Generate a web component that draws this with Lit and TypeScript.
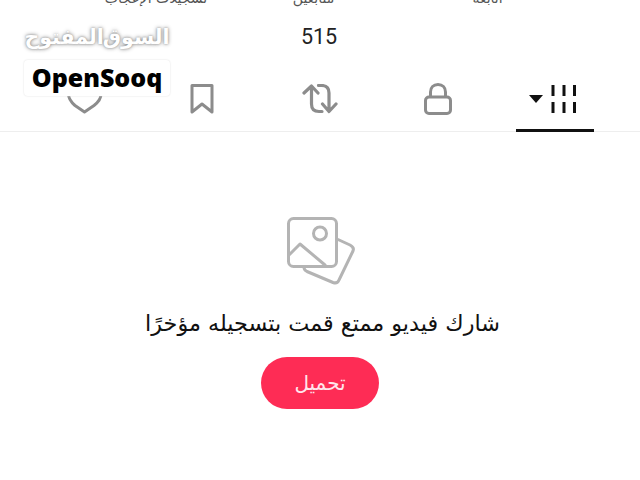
import { LitElement, html, css } from "lit";
import { customElement } from "lit/decorators.js";

@customElement("app-root")
export class AppRoot extends LitElement {
  static styles = css`
    :host { display: block; width: 640px; height: 480px; overflow: hidden; background: #fff; position: relative;
      font-family: "DejaVu Sans", "Noto Sans", sans-serif; color: #111; }
    .labels { display: grid; grid-template-columns: 90px 132px 70px 43px 135px 35px 1fr; height: 8px; overflow: hidden; }
    .label { font-size: 14px; line-height: 18px; margin-top: -11px; color: #555; white-space: nowrap; display: flex; justify-content: center; }
    .c1 { grid-column: 2; }
    .c2 { grid-column: 4; }
    .c3 { grid-column: 6; }
    .count { text-align: center; font: 21.5px/26px Roboto, sans-serif; margin-top: 16px; color: #222; height: 31px; padding-right: 2px; }
    .tabs { display: flex; padding: 0 26px; height: 76px; border-bottom: 1px solid #eee; }
    .tab { flex: 1; display: flex; align-items: flex-start; justify-content: center; padding-top: 29px; position: relative; }
    .tab svg { display: block; }
    .up { margin-top: -1px; }
    .nudge { margin-left: -3px; }
    .active::after { content: ""; position: absolute; left: 19.6px; bottom: -1px; width: 78px; height: 3px; background: #111; }
    .empty { display: flex; flex-direction: column; align-items: center; padding-top: 85px; }
    .pic { margin-left: 1px; }
    .msg { font-size: 22.3px; line-height: 30px; margin-top: 23px; margin-left: 5px; color: #111; white-space: nowrap; }
    .btn { margin-top: 19px; width: 118px; height: 52px; border-radius: 26px; background: #fe2c55; color: #ffe6ec;
      display: flex; align-items: center; justify-content: center; font-size: 20px; }
    .mark { position: absolute; left: 24px; top: 18px; width: 146px; display: flex; flex-direction: column; align-items: center; }
    .mark-ar { color: #fff; font-size: 20.5px; line-height: 38px; font-weight: 700; white-space: nowrap; word-spacing: -8px;
      text-shadow: 0 0 4px #888, 0 0 2px #aaa; }
    .mark-box { margin-top: 4px; width: 146px; height: 36px; background: #fff; border-radius: 4px; box-shadow: 0 0 2px #ddd;
      display: flex; align-items: center; justify-content: center; font: 800 25px/34px "Open Sans", sans-serif; color: #000; padding-bottom: 2px; box-sizing: border-box; }
  `;

  render() {
    return html`
      <div class="labels">
        <div class="label c1" dir="rtl">تسجيلات الإعجاب</div>
        <div class="label c2" dir="rtl">متابعين</div>
        <div class="label c3" dir="rtl">أتابعه</div>
      </div>
      <div class="count">515</div>
      <div class="tabs">
        <div class="tab">
          <svg width="36" height="32" viewBox="0 0 36 32" fill="none" stroke="#8c8c8c" stroke-width="3" stroke-linecap="round" stroke-linejoin="round">
            <path d="M17.5 28 L8 21.5 C4 18 1.5 14 1.5 10 C1.5 4 6 1 10 1 C13.5 1 16 3 17.5 5.5 C19 3 22.5 1 26 1 C30 1 34 4 34 10 C34 14 31.5 18 27 21.5 Z"/>
          </svg>
        </div>
        <div class="tab">
          <svg width="24" height="30" viewBox="0 0 24 30" fill="none" stroke="#8c8c8c" stroke-width="3" stroke-linejoin="round">
            <path d="M2 1.5 H22 V28 L12 20 L2 28 Z"/>
          </svg>
        </div>
        <div class="tab">
          <svg width="36" height="30" viewBox="0 0 36 30" fill="none" stroke="#8c8c8c" stroke-width="3.2" stroke-linecap="round" stroke-linejoin="round">
            <path d="M2 9 L9.5 2 L16 9 M9.5 3 V20 C9.5 25 12 27.5 17 27.5 H20"/>
            <path d="M34 20 L27 27.5 L20.5 20 M27 26 V9 C27 4 24.5 1.5 19.5 1.5 H16.5"/>
          </svg>
        </div>
        <div class="tab">
          <svg class="up" width="28" height="32" viewBox="0 0 28 32" fill="none" stroke="#8c8c8c" stroke-width="3">
            <rect x="1.5" y="14" width="25" height="16.5" rx="3.5"/>
            <path d="M6.5 14 V9 C6.5 4.5 9.5 1.5 14 1.5 C18.5 1.5 21.5 4.5 21.5 9 V14"/>
          </svg>
        </div>
        <div class="tab active">
          <svg class="nudge" width="50" height="30" viewBox="0 0 50 30" fill="#111">
            <path d="M0 11 H14 L7 19 Z"/>
            <rect x="22.5" y="1" width="3" height="11"/><rect x="33.5" y="1" width="3" height="11"/><rect x="44" y="1" width="3" height="11"/>
            <rect x="22.5" y="18" width="3" height="11"/><rect x="33.5" y="18" width="3" height="11"/><rect x="44" y="18" width="3" height="11"/>
          </svg>
        </div>
      </div>
      <div class="empty">
        <svg class="pic" width="68" height="68" viewBox="0 0 68 68" fill="none" stroke="#b4b4b4" stroke-width="3" stroke-linejoin="round" stroke-linecap="round">
          <rect x="1.5" y="1.5" width="48" height="48" rx="5"/>
          <circle cx="33" cy="16.5" r="6.5"/>
          <path d="M2 38 L13 27 L38 48"/>
          <path d="M17 50.5 C17 52 18 53.5 20 54.5 L46 65.5 C49 66.5 51 65.5 52 63 L66 34 C67 31.5 66 29.5 63 28 L51 22.5"/>
        </svg>
        <div class="msg" dir="rtl">شارك فيديو ممتع قمت بتسجيله مؤخرًا</div>
        <div class="btn" dir="rtl">تحميل</div>
      </div>
      <div class="mark">
        <div class="mark-ar" dir="rtl">السوق المفتوح</div>
        <div class="mark-box">OpenSooq</div>
      </div>
    `;
  }
}
